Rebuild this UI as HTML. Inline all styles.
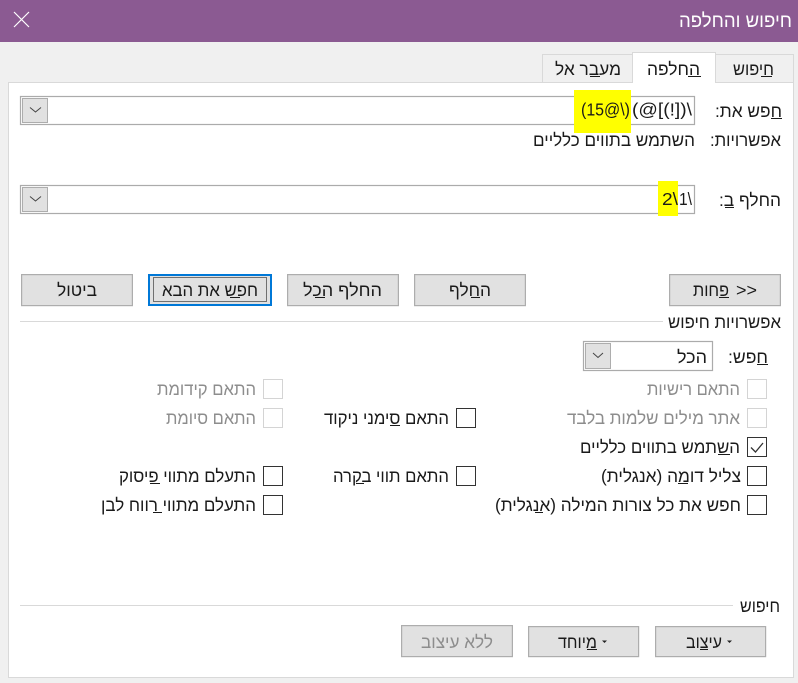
<!DOCTYPE html>
<html lang="he">
<head>
<meta charset="utf-8">
<title>חיפוש והחלפה</title>
<style>
html,body{margin:0;padding:0;background:#f0f0f0;width:798px;height:683px;overflow:hidden}
svg{display:block}
text{font-family:"Liberation Sans","Noto Sans CJK SC",sans-serif;font-size:17.5px;fill:#1a1a1a}
text.r{direction:rtl;text-anchor:start}
text.g{fill:#8d8d8d}
text.l{direction:ltr;text-anchor:start}
.btn{fill:#e1e1e1;stroke:#adadad;stroke-width:1.2}
.cb{fill:#fff;stroke:#333;stroke-width:1}
.cbd{fill:#fff;stroke:#d4d4d4;stroke-width:1}
.in{fill:#fff;stroke:#ababab;stroke-width:1.2}
.tab{fill:#f0f0f0;stroke:#d9d9d9;stroke-width:1}
.sep{stroke:#d9d9d9;stroke-width:1}
.u{stroke:#1a1a1a;stroke-width:1}
.dd{fill:#e1e1e1;stroke:#adadad;stroke-width:1}
.ch{fill:none;stroke:#444;stroke-width:1}
</style>
</head>
<body>
<svg width="798" height="683" viewBox="0 0 798 683" xmlns="http://www.w3.org/2000/svg">
<rect x="0" y="0" width="798" height="683" fill="#f0f0f0"/>
<rect x="0" y="0" width="798" height="42" fill="#8b5a92"/>
<path d="M14 12L29 27M29 12L14 27" stroke="#fff" stroke-width="1.2" fill="none"/>
<text class="r" x="792" y="27" textLength="113" lengthAdjust="spacingAndGlyphs" style="fill:#fff;font-size:19px">חיפוש והחלפה</text>

<rect x="8.5" y="82.5" width="785" height="595" fill="#fff" stroke="#d9d9d9"/>
<rect class="tab" x="715.5" y="54.5" width="78" height="28"/>
<rect class="tab" x="542.5" y="54.5" width="90" height="28"/>
<path d="M632.5 83V52.5H715.5V83" fill="#fff" stroke="#d9d9d9"/>
<rect x="633" y="80" width="82" height="4" fill="#fff"/>
<text class="r" x="774" y="75" textLength="41" lengthAdjust="spacingAndGlyphs">חיפוש</text>
<line class="u" x1="761" y1="76.5" x2="772" y2="76.5"/>
<text class="r" x="700" y="75" textLength="53" lengthAdjust="spacingAndGlyphs">החלפה</text>
<line class="u" x1="688" y1="76.5" x2="701" y2="76.5"/>
<text class="r" x="621" y="75" textLength="66" lengthAdjust="spacingAndGlyphs">מעבר אל</text>
<line class="u" x1="590" y1="76.5" x2="600" y2="76.5"/>

<text class="r" x="782" y="117" textLength="67" lengthAdjust="spacingAndGlyphs">חפש את:</text>
<line class="u" x1="771" y1="118.5" x2="782" y2="118.5"/>
<rect class="in" x="20.5" y="96.5" width="674" height="28"/>
<rect class="dd" x="22.5" y="98.5" width="25" height="24"/>
<path class="ch" d="M30 107.5L35.5 112L41 107.5"/>
<rect x="574" y="90" width="57" height="43" fill="#ffff00"/>
<text class="l" x="581" y="115.5" textLength="49" lengthAdjust="spacingAndGlyphs">(15@\)</text>
<text class="l" x="632" y="115.5" textLength="60" lengthAdjust="spacingAndGlyphs">(@[(!])\</text>

<text class="r" x="781" y="146" textLength="71" lengthAdjust="spacingAndGlyphs">אפשרויות:</text>
<text class="r" x="695" y="146" textLength="162" lengthAdjust="spacingAndGlyphs">השתמש בתווים כלליים</text>

<text class="r" x="781" y="206" textLength="62" lengthAdjust="spacingAndGlyphs">החלף ב:</text>
<line class="u" x1="725" y1="207.5" x2="734" y2="207.5"/>
<rect class="in" x="20.5" y="185.5" width="674" height="28"/>
<rect class="dd" x="22.5" y="187.5" width="25" height="24"/>
<path class="ch" d="M30 196.5L35.5 201L41 196.5"/>
<rect x="658" y="181" width="20" height="35" fill="#ffff00"/>
<text class="l" x="662" y="205" textLength="16" lengthAdjust="spacingAndGlyphs">2\</text>
<text class="l" x="679" y="205" textLength="13" lengthAdjust="spacingAndGlyphs">1\</text>

<rect class="btn" x="669.6" y="274.6" width="110.8" height="31"/>
<text class="l" x="736" y="296" textLength="21" lengthAdjust="spacingAndGlyphs">&gt;&gt;</text>
<text class="r" x="729" y="296" textLength="36" lengthAdjust="spacingAndGlyphs">פחות</text>
<line class="u" x1="719" y1="297.5" x2="729" y2="297.5"/>
<rect class="btn" x="414.6" y="274.6" width="110.8" height="31"/>
<text class="r" x="491" y="296" textLength="42" lengthAdjust="spacingAndGlyphs">החלף</text>
<line class="u" x1="471" y1="297.5" x2="480" y2="297.5"/>
<rect class="btn" x="287.6" y="274.6" width="110.8" height="31"/>
<text class="r" x="382" y="296" textLength="79" lengthAdjust="spacingAndGlyphs">החלף הכל</text>
<line class="u" x1="315" y1="297.5" x2="325" y2="297.5"/>
<rect x="149" y="275" width="122" height="30" fill="#e1e1e1" stroke="#0078d7" stroke-width="2"/>
<rect x="153.5" y="277.5" width="113" height="24" fill="none" stroke="#000" stroke-width="1" stroke-dasharray="1 1" shape-rendering="crispEdges"/>
<text class="r" x="258" y="296" textLength="96" lengthAdjust="spacingAndGlyphs">חפש את הבא</text>
<line class="u" x1="230" y1="297.5" x2="240" y2="297.5"/>
<rect class="btn" x="21.6" y="274.6" width="110.8" height="31"/>
<text class="r" x="97" y="296" textLength="40" lengthAdjust="spacingAndGlyphs">ביטול</text>

<line class="sep" x1="20" y1="321.5" x2="663" y2="321.5"/>
<text class="r" x="781" y="328" textLength="113" lengthAdjust="spacingAndGlyphs">אפשרויות חיפוש</text>

<text class="r" x="768" y="363" textLength="40" lengthAdjust="spacingAndGlyphs">חפש:</text>
<line class="u" x1="757" y1="364.5" x2="768" y2="364.5"/>
<rect class="in" x="583.5" y="341.5" width="129" height="29"/>
<rect class="dd" x="585.5" y="343.5" width="25" height="25"/>
<path class="ch" d="M593 353L598 357.5L603 353"/>
<text class="r" x="707" y="363" textLength="30" lengthAdjust="spacingAndGlyphs">הכל</text>

<rect class="cbd" x="747.5" y="379.5" width="19" height="19"/>
<text class="r g" x="740" y="395" textLength="93" lengthAdjust="spacingAndGlyphs">התאם רישיות</text>
<rect class="cbd" x="747.5" y="408.5" width="19" height="19"/>
<text class="r g" x="740" y="424" textLength="173" lengthAdjust="spacingAndGlyphs">אתר מילים שלמות בלבד</text>
<rect class="cb" x="747.5" y="437.5" width="19" height="19"/>
<path d="M751 447.5L755.5 452L763 443" fill="none" stroke="#333" stroke-width="1.3"/>
<text class="r" x="740" y="453" textLength="160" lengthAdjust="spacingAndGlyphs">השתמש בתווים כלליים</text>
<line class="u" x1="718" y1="454.5" x2="730" y2="454.5"/>
<rect class="cb" x="747.5" y="466.5" width="19" height="19"/>
<text class="r" x="741" y="482" textLength="140" lengthAdjust="spacingAndGlyphs">צליל דומה (אנגלית)</text>
<line class="u" x1="678" y1="483.5" x2="688" y2="483.5"/>
<rect class="cb" x="747.5" y="495.5" width="19" height="19"/>
<text class="r" x="741" y="511" textLength="246" lengthAdjust="spacingAndGlyphs">חפש את כל צורות המילה (אנגלית)</text>
<line class="u" x1="535" y1="512.5" x2="543" y2="512.5"/>

<rect class="cb" x="456.5" y="408.5" width="19" height="19"/>
<text class="r" x="449" y="424" textLength="125" lengthAdjust="spacingAndGlyphs">התאם סימני ניקוד</text>
<line class="u" x1="390" y1="425.5" x2="400" y2="425.5"/>
<rect class="cb" x="456.5" y="466.5" width="19" height="19"/>
<text class="r" x="449" y="482" textLength="116" lengthAdjust="spacingAndGlyphs">התאם תווי בקרה</text>
<line class="u" x1="356" y1="483.5" x2="364" y2="483.5"/>

<rect class="cbd" x="263.5" y="379.5" width="19" height="19"/>
<text class="r g" x="256" y="395" textLength="99" lengthAdjust="spacingAndGlyphs">התאם קידומת</text>
<rect class="cbd" x="263.5" y="408.5" width="19" height="19"/>
<text class="r g" x="256" y="424" textLength="90" lengthAdjust="spacingAndGlyphs">התאם סיומת</text>
<rect class="cb" x="263.5" y="466.5" width="19" height="19"/>
<text class="r" x="256" y="482" textLength="137" lengthAdjust="spacingAndGlyphs">התעלם מתווי פיסוק</text>
<line class="u" x1="150" y1="483.5" x2="160" y2="483.5"/>
<rect class="cb" x="263.5" y="495.5" width="19" height="19"/>
<text class="r" x="256" y="511" textLength="155" lengthAdjust="spacingAndGlyphs">התעלם מתווי רווח לבן</text>
<line class="u" x1="153" y1="512.5" x2="162" y2="512.5"/>

<line class="sep" x1="20" y1="605.5" x2="733" y2="605.5"/>
<text class="r" x="780" y="612" textLength="40" lengthAdjust="spacingAndGlyphs">חיפוש</text>

<rect class="btn" x="655.6" y="626.6" width="110" height="30"/>
<path d="M727 640.5H732L729.5 643Z" fill="#222"/>
<text class="r" x="722" y="648" textLength="36" lengthAdjust="spacingAndGlyphs">עיצוב</text>
<line class="u" x1="700" y1="649.5" x2="708" y2="649.5"/>
<rect class="btn" x="528.6" y="626.6" width="110" height="30"/>
<path d="M602 640.5H607L604.5 643Z" fill="#222"/>
<text class="r" x="597" y="648" textLength="39" lengthAdjust="spacingAndGlyphs">מיוחד</text>
<line class="u" x1="587" y1="649.5" x2="597" y2="649.5"/>
<rect class="btn" x="401.6" y="625.6" width="110.8" height="31"/>
<text class="r g" x="493" y="648" textLength="72" lengthAdjust="spacingAndGlyphs">ללא עיצוב</text>
</svg>
</body>
</html>
